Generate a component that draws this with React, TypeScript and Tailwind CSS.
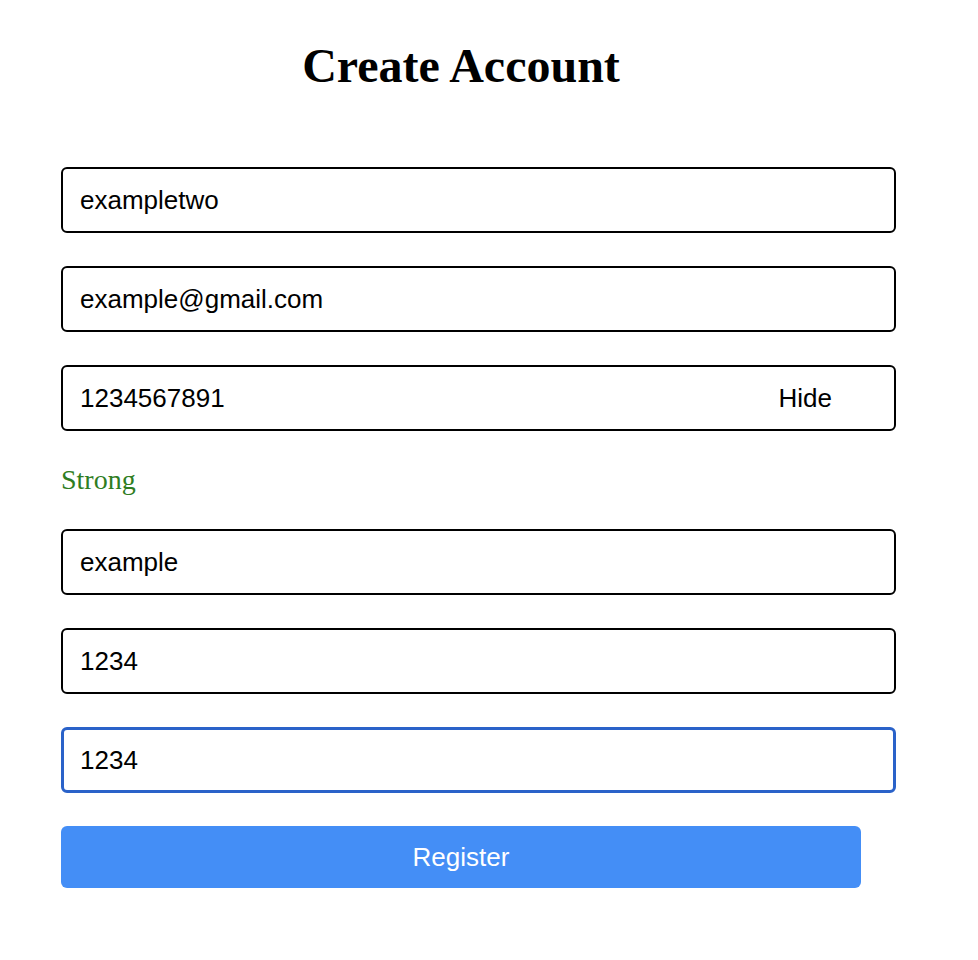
import React from "react";

export default function App() {
  const inputCls =
    "box-border w-[835px] h-[66px] border-2 border-black rounded-[6px] px-[17px] text-[26px] text-black bg-white outline-none";
  return (
    <div className="min-h-[960px] w-[978px] bg-white pl-[61px] pt-[42px]" style={{ fontFamily: '"Liberation Sans", Arial, sans-serif' }}>
      <div className="w-[800px]">
        <h1
          className="text-center text-[48px] font-bold leading-none text-black"
          style={{ fontFamily: '"Liberation Serif", "Times New Roman", serif' }}
        >
          Create Account
        </h1>
        <form className="mt-[77px] flex flex-col gap-[33px]" onSubmit={(e) => e.preventDefault()}>
          <input className={inputCls} defaultValue="exampletwo" />
          <input className={inputCls} defaultValue="example@gmail.com" />
          <div className="relative w-[835px]">
            <input className={inputCls} defaultValue="1234567891" />
            <button
              type="button"
              className="absolute right-[64px] top-0 flex h-[66px] items-center text-[26px] text-black"
            >
              Hide
            </button>
          </div>
          <div
            className="h-[32px] text-[28px] leading-[32px] text-[#2f7d22]"
            style={{ fontFamily: '"Liberation Serif", "Times New Roman", serif' }}
          >
            Strong
          </div>
          <input className={inputCls} defaultValue="example" />
          <input className={inputCls} defaultValue="1234" />
          <input
            className="box-border w-[835px] h-[66px] border-[3px] border-[#2a62c9] rounded-[6px] px-[16px] text-[26px] text-black bg-white outline-none"
            defaultValue="1234"
          />
          <button
            type="submit"
            className="h-[62px] w-[800px] rounded-[6px] bg-[#448ef6] text-[26px] text-white"
          >
            Register
          </button>
        </form>
      </div>
    </div>
  );
}
